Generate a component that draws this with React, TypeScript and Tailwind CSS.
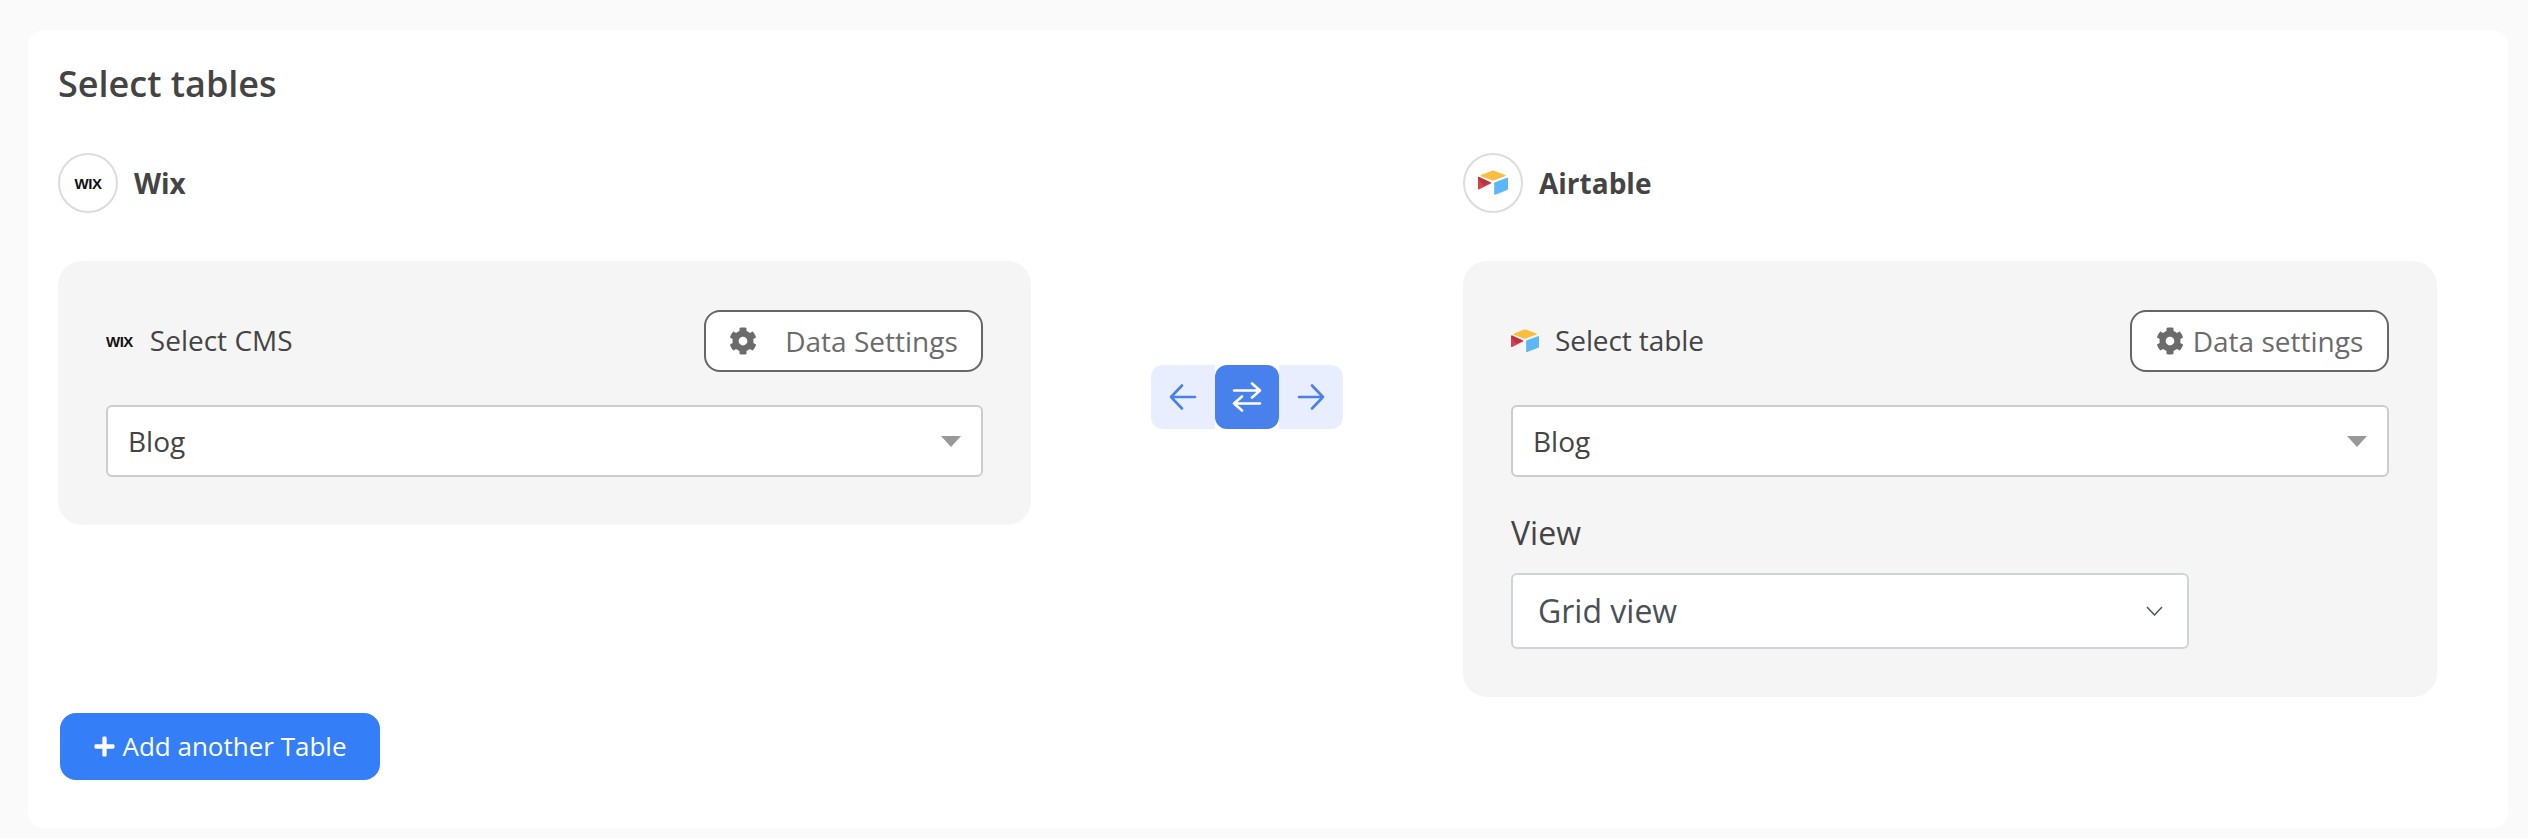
import { ReactNode } from "react";
import { FaCog, FaPlus } from "react-icons/fa";

const font = "font-['Open_Sans',sans-serif]";

const WixLogo = ({ className }: { className: string }) => (
  <span className={`font-['Liberation_Sans',sans-serif] font-bold leading-none text-[#111] tracking-[-0.5px] ${className}`}>
    WIX
  </span>
);

const AirtableLogo = ({ size }: { size: number }) => (
  <svg width={size} height={size * 0.85} viewBox="0 0 200 170">
    <path d="M90 6 L20 34 Q14 38 20 41 L92 68 Q100 71 108 68 L182 40 Q188 36 182 33 L110 6 Q100 2 90 6Z" fill="#f9bd3f" />
    <path d="M108 88 V160 Q108 168 116 165 L194 134 Q200 131 200 126 V56 Q200 48 192 51 L114 81 Q108 84 108 88Z" fill="#5cb7f7" />
    <path d="M0 52 V124 Q0 132 8 128 L86 90 Q92 86 86 83 L8 47 Q0 44 0 52Z" fill="#d8404c" />
    <path d="M0 48 L8 47 L86 83 L40 104 L0 60Z" fill="#a52b3a" opacity="0.6" />
  </svg>
);

const LogoCircle = ({ children }: { children: ReactNode }) => (
  <div className="w-[60px] h-[60px] rounded-full border-2 border-[#dcdcdc] bg-white flex items-center justify-center">
    {children}
  </div>
);

const SelectBox = ({ value }: { value: string }) => (
  <div className="h-[72px] rounded-md border-2 border-[#cccccc] bg-white flex items-center justify-between pl-5 pr-5">
    <span className="text-[28px] text-[#444444]">{value}</span>
    <span className="w-0 h-0 border-l-[10px] border-r-[10px] border-t-[11px] border-l-transparent border-r-transparent border-t-[#999999]" />
  </div>
);

const SettingsButton = ({ label, gapClass, widthClass }: { label: string; gapClass: string; widthClass: string }) => (
  <button className={`h-[62px] rounded-2xl border-2 border-[#666666] bg-white flex items-center justify-center text-[#6b6b6b] text-[28px] ${gapClass} ${widthClass}`}>
    <FaCog className="text-[28px]" />
    <span>{label}</span>
  </button>
);

const SwapButtons = () => (
  <div className="flex mt-[104px] h-16">
    <div className="w-16 bg-[#e8eefd] rounded-l-xl flex items-center justify-center">
      <svg width="28" height="28" viewBox="0 0 28 28" fill="none" stroke="#4a80ec" strokeWidth="2.6" strokeLinecap="round" strokeLinejoin="round">
        <path d="M26 14H2M13 2.5 2 14l11 11.5" />
      </svg>
    </div>
    <div className="w-16 bg-[#4880ec] rounded-xl flex items-center justify-center">
      <svg width="30" height="30" viewBox="0 0 30 30" fill="none" stroke="#ffffff" strokeWidth="2.6" strokeLinecap="round" strokeLinejoin="round">
        <path d="M2 8.5h26M20 1.5l8 7-8 7M28 21.5H2M10 14.5l-8 7 8 7" />
      </svg>
    </div>
    <div className="w-16 bg-[#e8eefd] rounded-r-xl flex items-center justify-center">
      <svg width="28" height="28" viewBox="0 0 28 28" fill="none" stroke="#4a80ec" strokeWidth="2.6" strokeLinecap="round" strokeLinejoin="round">
        <path d="M2 14h24M15 2.5 26 14 15 25.5" />
      </svg>
    </div>
  </div>
);

const App = () => {
  return (
    <div className={`${font} w-[2528px] h-[838px] bg-[#fafafa] pt-[30px] pl-7 pr-5 pb-[10px] overflow-hidden`}>
      <div className="bg-white rounded-2xl h-[798px] pl-[30px] pr-[71px] pt-8">
        <h2 className="text-[36px] leading-[44px] font-semibold text-[#444444]">Select tables</h2>

        <div className="flex justify-between mt-[47px]">
          <div className="w-[973px]">
            <div className="flex items-center gap-4 mb-[48px]">
              <LogoCircle>
                <WixLogo className="text-[15px]" />
              </LogoCircle>
              <span className="text-[28px] font-bold text-[#444444]">Wix</span>
            </div>
            <div className="bg-[#f5f5f5] rounded-3xl h-[264px] px-12 pt-[49px]">
              <div className="flex items-center justify-between mb-[33px]">
                <div className="flex items-center gap-[17px]">
                  <WixLogo className="text-[15px]" />
                  <span className="text-[28px] text-[#444444] relative -top-px">Select CMS</span>
                </div>
                <SettingsButton label="Data Settings" gapClass="gap-7" widthClass="w-[279px]" />
              </div>
              <SelectBox value="Blog" />
            </div>
          </div>

          <div className="pt-[108px]">
            <SwapButtons />
          </div>

          <div className="w-[974px]">
            <div className="flex items-center gap-4 mb-[48px]">
              <LogoCircle>
                <AirtableLogo size={30} />
              </LogoCircle>
              <span className="text-[28px] font-bold text-[#444444]">Airtable</span>
            </div>
            <div className="bg-[#f5f5f6] rounded-3xl h-[436px] px-12 pt-[49px]">
              <div className="flex items-center justify-between mb-[33px]">
                <div className="flex items-center gap-[16px]">
                  <AirtableLogo size={28} />
                  <span className="text-[28px] tracking-[-0.1px] text-[#444444] relative -top-px">Select table</span>
                </div>
                <SettingsButton label="Data settings" gapClass="gap-[9px]" widthClass="w-[259px]" />
              </div>
              <SelectBox value="Blog" />
              <div className="text-[32px] leading-[44px] text-[#444444] mt-[34px] mb-[18px]">View</div>
              <div className="w-[678px] h-[76px] rounded-md border-2 border-[#ced4da] bg-white flex items-center justify-between pl-[25px] pr-[24px]">
                <span className="text-[32px] text-[#495057]">Grid view</span>
                <svg width="17" height="10" viewBox="0 0 17 10" fill="none" stroke="#495057" strokeWidth="1.4">
                  <path d="M1 1l7.5 8L16 1" />
                </svg>
              </div>
            </div>
          </div>
        </div>

        <button className="mt-4 ml-0.5 w-[320px] h-[67px] rounded-2xl bg-[#347ff8] text-white text-[26px] flex items-center justify-center gap-[6px]">
          <FaPlus className="text-[23px]" />
          <span>Add another Table</span>
        </button>
      </div>
    </div>
  );
};

export default App;
